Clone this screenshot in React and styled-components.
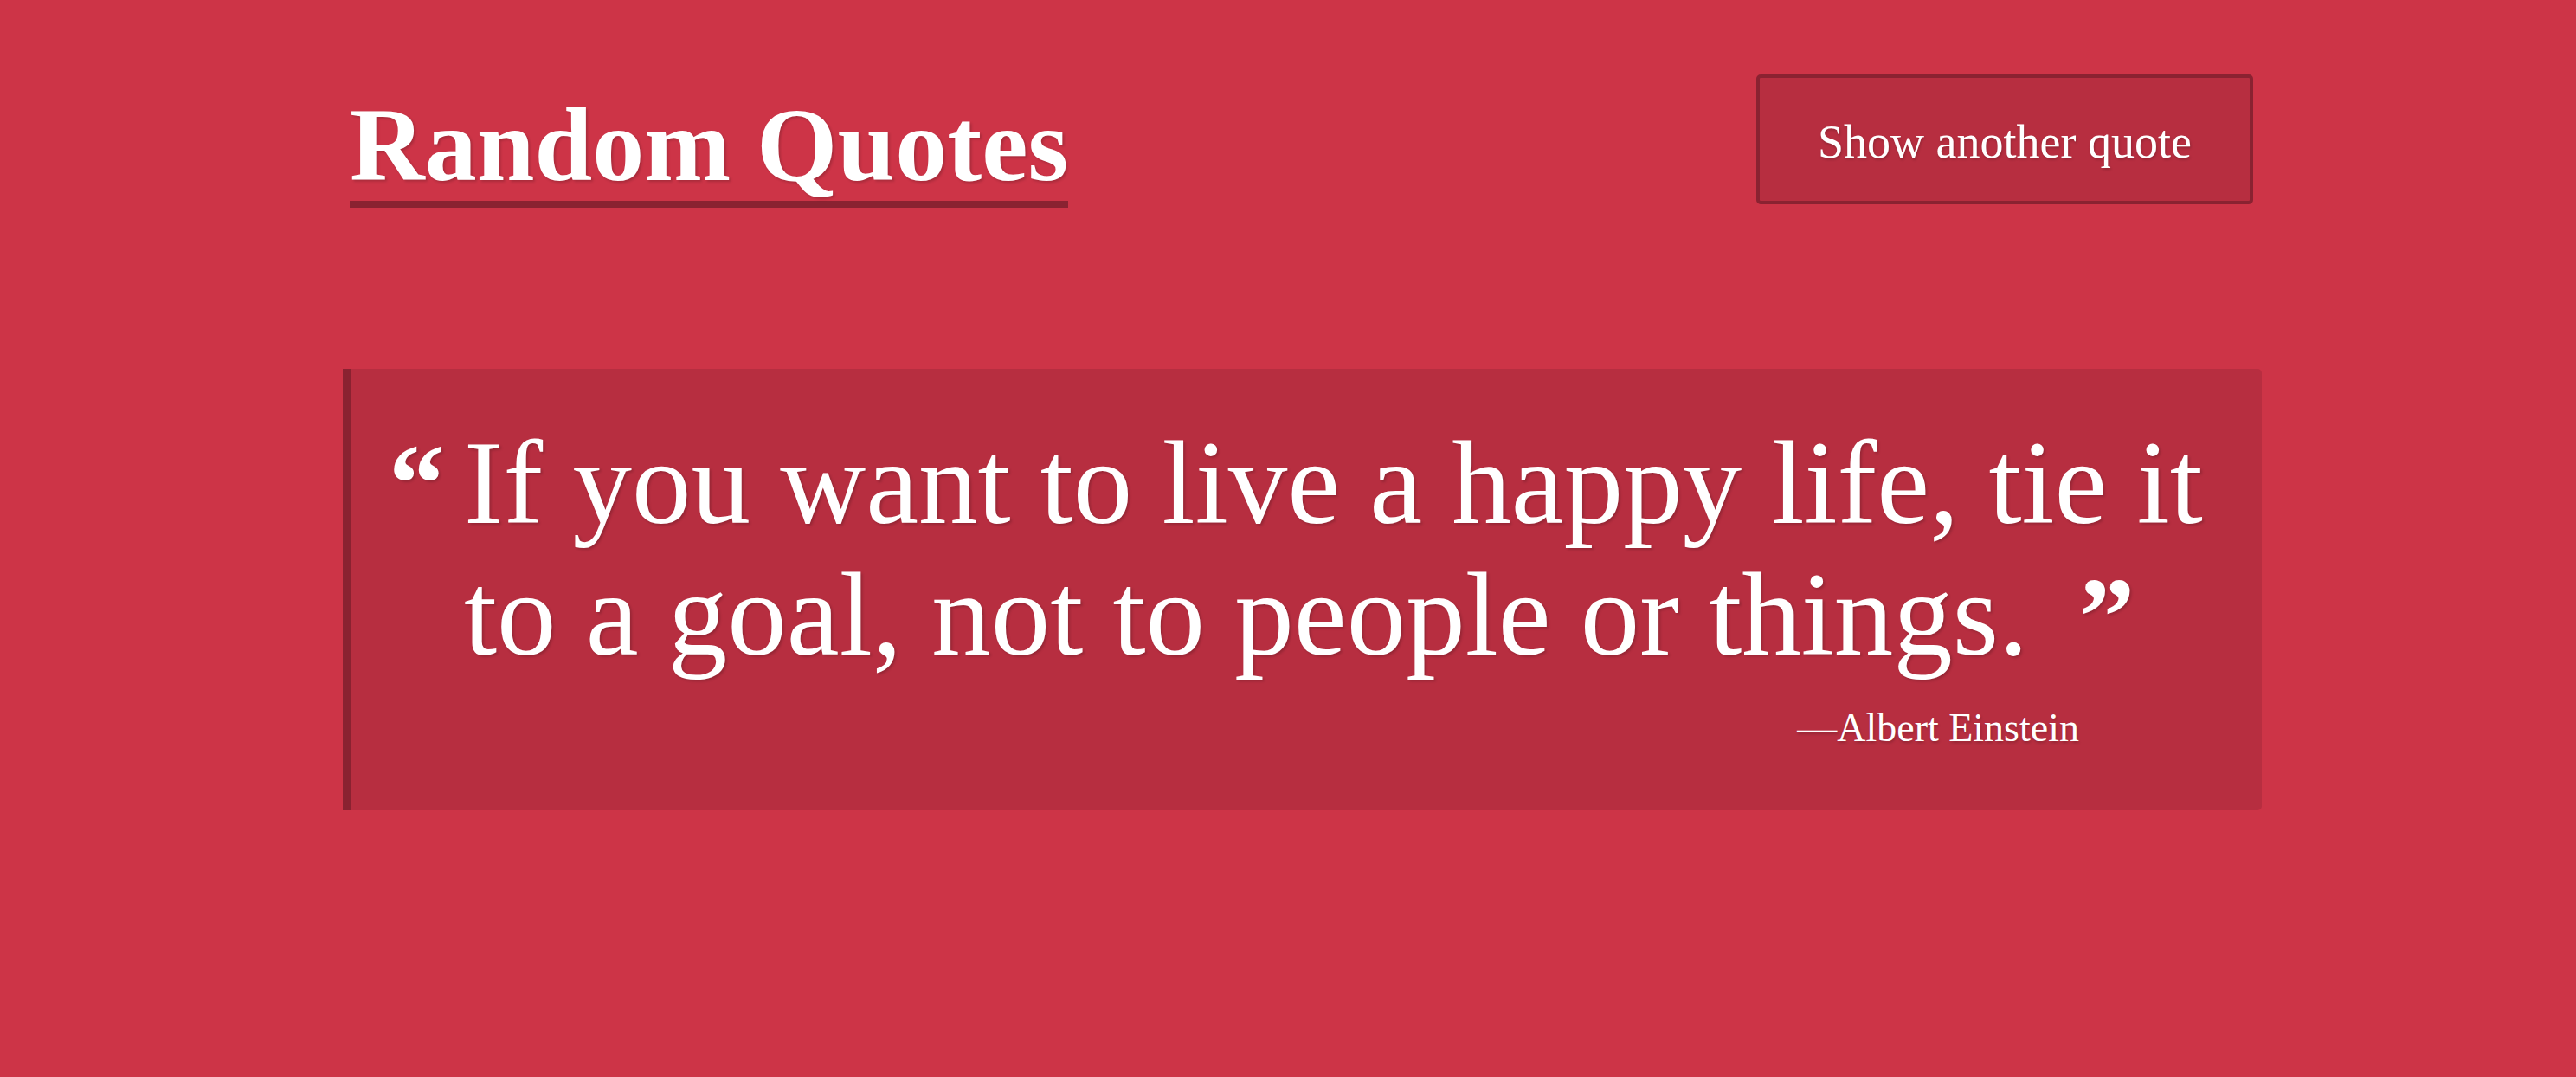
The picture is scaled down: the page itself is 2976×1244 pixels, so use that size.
import React from "react";
import styled, { createGlobalStyle } from "styled-components";

const GlobalStyle = createGlobalStyle`
  html, body {
    margin: 0;
    padding: 0;
    background: #cd3447;
    min-height: 100vh;
  }
  body {
    font-family: "Liberation Serif", "Times New Roman", serif;
    color: #ffffff;
  }
`;

const Page = styled.main`
  width: 2217px;
  margin-left: 396px;
  padding-top: 86px;
`;

const Header = styled.header`
  display: flex;
  justify-content: space-between;
  align-items: flex-start;
  padding: 0 10px 0 8px;
`;

const Title = styled.h1`
  margin: 17px 0 0 0;
  font-size: 120px;
  font-weight: 700;
  line-height: 129px;
  border-bottom: 8px solid #8a2231;
  text-shadow: 2px 2px 3px rgba(0, 0, 0, 0.18);
`;

const Button = styled.button`
  width: 574px;
  height: 150px;
  background: #b72e40;
  border: 4px solid #8a2231;
  border-radius: 5px;
  color: #ffffff;
  font-family: "Liberation Serif", "Times New Roman", serif;
  font-size: 54px;
  padding: 6px 0 0 0;
  cursor: pointer;
  text-shadow: 1px 2px 3px rgba(0, 0, 0, 0.2);
`;

const QuoteBox = styled.blockquote`
  margin: 186px 0 0 0;
  background: #b72e40;
  border-left: 10px solid #8a2231;
  border-radius: 0 5px 5px 0;
  padding: 56px 20px 69px 43px;
`;

const QuoteRow = styled.div`
  display: flex;
  align-items: flex-start;
`;

const Mark = styled.span`
  font-size: 130px;
  font-weight: 700;
  line-height: 152px;
  text-shadow: 2px 2px 3px rgba(0, 0, 0, 0.18);
`;

const OpenMark = styled(Mark)`
  margin-right: 22px;
  flex: none;
`;

const CloseMark = styled(Mark)`
  display: inline-block;
  margin-left: 58px;
`;

const QuoteText = styled.p`
  flex: 1;
  margin: 0;
  font-size: 137px;
  line-height: 152px;
  text-shadow: 2px 2px 3px rgba(0, 0, 0, 0.18);
`;

const Cite = styled.footer`
  display: flex;
  justify-content: flex-end;
  margin-top: 26px;
  padding-right: 191px;
  font-size: 46px;
  line-height: 53px;
  text-shadow: 1px 2px 3px rgba(0, 0, 0, 0.2);
`;

export default function App() {
  return (
    <>
      <GlobalStyle />
      <Page>
        <Header>
          <Title>Random Quotes</Title>
          <Button type="button">Show another quote</Button>
        </Header>
        <QuoteBox>
          <QuoteRow>
            <OpenMark>“</OpenMark>
            <QuoteText>
              If you want to live a happy life, tie it to a goal, not to people or things.
              <CloseMark>”</CloseMark>
            </QuoteText>
          </QuoteRow>
          <Cite>—Albert Einstein</Cite>
        </QuoteBox>
      </Page>
    </>
  );
}
